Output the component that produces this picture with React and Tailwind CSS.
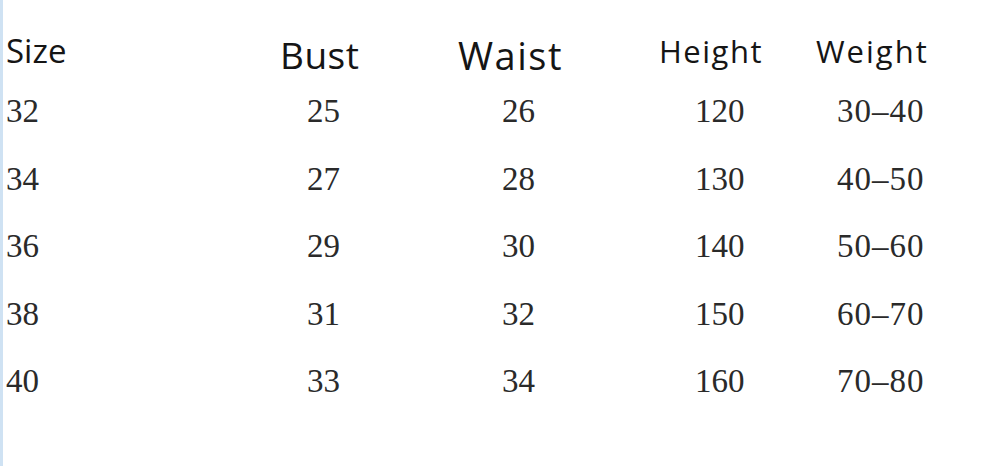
import React from 'react';

const rows = [
  ['32', '25', '26', '120', '30–40'],
  ['34', '27', '28', '130', '40–50'],
  ['36', '29', '30', '140', '50–60'],
  ['38', '31', '32', '150', '60–70'],
  ['40', '33', '34', '160', '70–80'],
];

const cols = 'grid grid-cols-[277px_176px_202px_156px_1fr]';

const App = () => {
  return (
    <div className="w-[1000px] h-[466px] bg-white border-l-[3px] border-[#cfe2f3] overflow-hidden">
      {/* header */}
      <div
        className={`${cols} h-[95px] items-start leading-none text-[#151515]`}
        style={{ fontFamily: '"Open Sans", sans-serif' }}
      >
        <div className="pt-[34px] pl-[3px] text-[33px]">Size</div>
        <div className="pt-[36px] pl-[0px] text-[37px] tracking-[0.5px]">Bust</div>
        <div className="pt-[36px] pl-[2px] text-[38px] tracking-[1.5px]">Waist</div>
        <div className="pt-[36px] pl-[1px] text-[31px] tracking-[1.5px]">Height</div>
        <div className="pt-[36px] pl-[2px] text-[31px] tracking-[2px]">Weight</div>
      </div>

      {/* size rows */}
      <div
        className="flex flex-col text-[33px] leading-none text-[#2a2a2a]"
        style={{ fontFamily: '"Liberation Serif", serif' }}
      >
        {rows.map((r) => (
          <div key={r[0]} className={`${cols} h-[67.5px] items-start`}>
            <div className="pl-[3px]">{r[0]}</div>
            <div className="pl-[27px]">{r[1]}</div>
            <div className="pl-[46px]">{r[2]}</div>
            <div className="pl-[37px]">{r[3]}</div>
            <div className="pl-[23px] tracking-[1px]">{r[4]}</div>
          </div>
        ))}
      </div>
    </div>
  );
};

export default App;
